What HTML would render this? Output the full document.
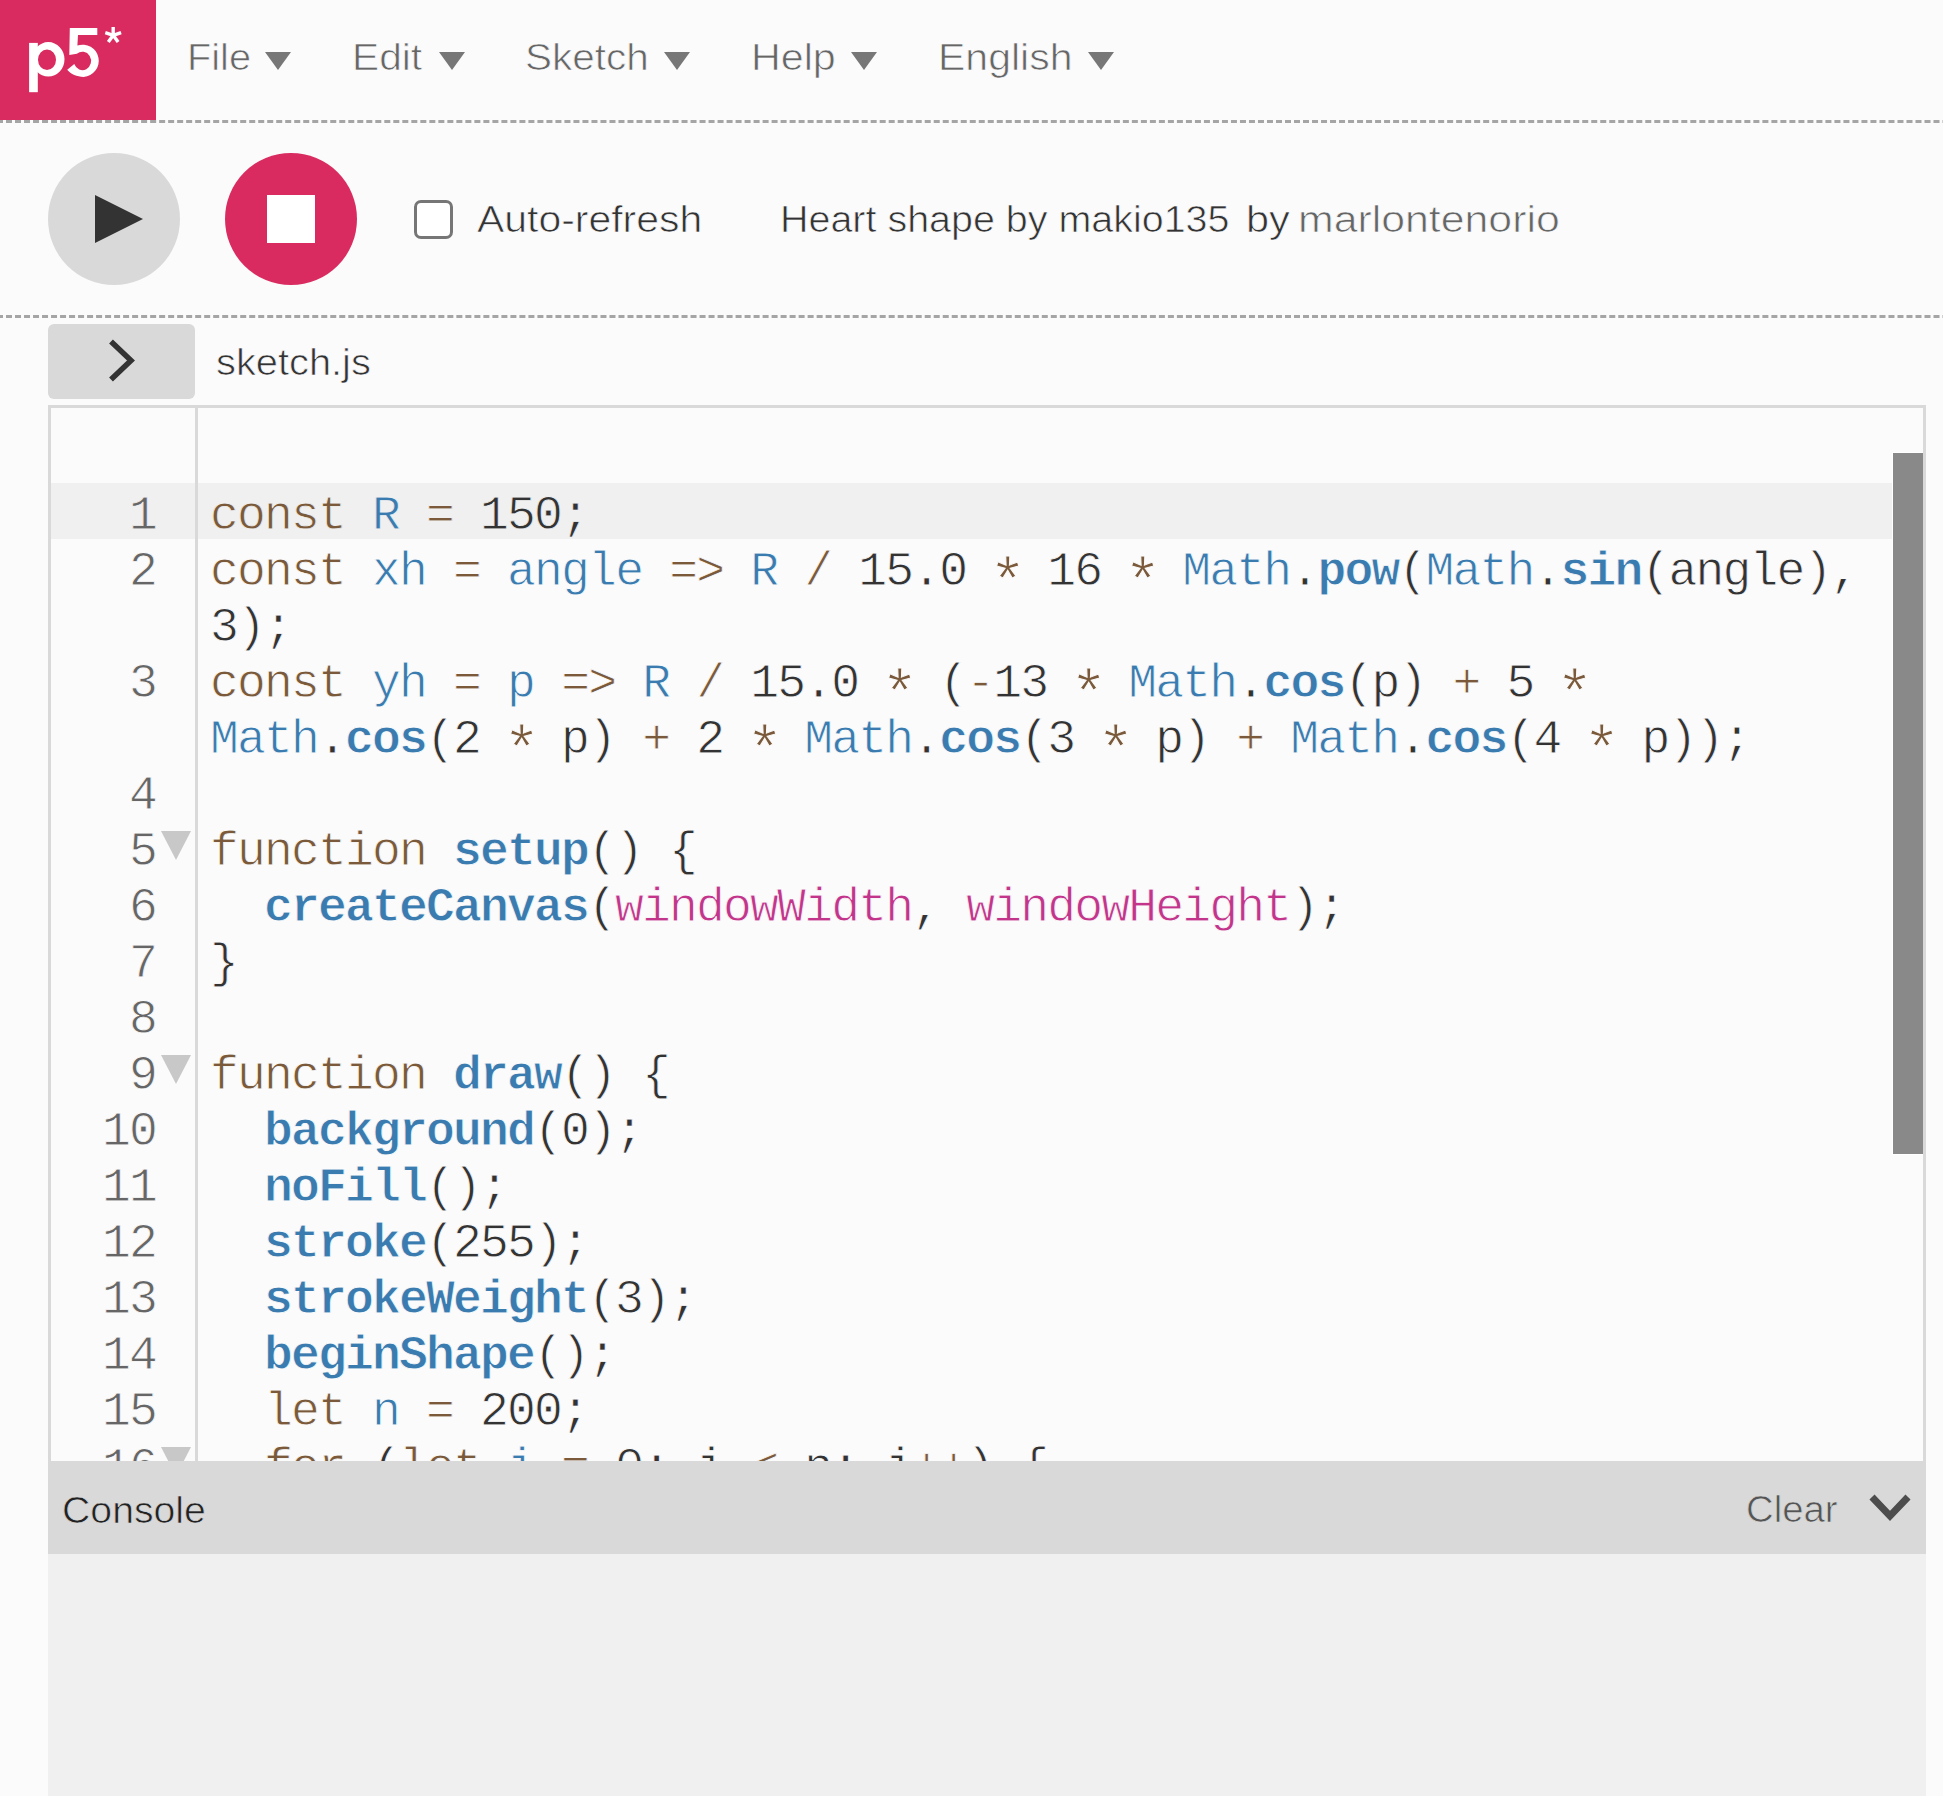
<!DOCTYPE html>
<html><head><meta charset="utf-8">
<style>
html,body{margin:0;padding:0;}
body{width:1943px;height:1796px;overflow:hidden;background:#fbfbfb;position:relative;font-family:"Liberation Sans",sans-serif;}
.abs{position:absolute;}
.sans{font-family:"Liberation Sans",sans-serif;white-space:pre;line-height:1;-webkit-text-stroke:0.7px #fbfbfb;}
.hd{-webkit-text-stroke:0.7px #d9d9d9 !important;}
.dash{position:absolute;left:0;width:1943px;height:3px;
 background-image:linear-gradient(to right,#a5a5a5 0,#a5a5a5 6px,transparent 6px);background-size:9px 3px;background-position:6px 0;}
.menu{position:absolute;top:39px;font-size:37px;color:#666;}
.tri{position:absolute;top:52px;width:0;height:0;border-left:13.5px solid transparent;border-right:13.5px solid transparent;border-top:18px solid #777;}
.code{position:absolute;left:210px;font-family:"Liberation Mono",monospace;font-size:48px;letter-spacing:-1.8px;white-space:pre;line-height:56px;height:56px;color:#333;-webkit-text-stroke:0.8px #fbfbfb;}
.r1{-webkit-text-stroke:0.8px #f0f0f0 !important;}
.ln{position:absolute;left:51px;width:105px;text-align:right;font-family:"Liberation Mono",monospace;font-size:48px;letter-spacing:-1.8px;white-space:pre;line-height:56px;height:56px;color:#666;-webkit-text-stroke:0.8px #fbfbfb;}
.k{color:#7a5a3a}
.v{color:#3a7cb0}
.b{color:#3a7cb0;font-weight:bold}
.pk{color:#c2358b}
.a{display:inline-block;transform:translateY(13.5px) scale(1.3)}
.fold{position:absolute;left:161px;width:0;height:0;border-left:15px solid transparent;border-right:15px solid transparent;border-top:29px solid #c8c8c8;}
</style></head><body>

<!-- NAV -->
<div class="abs" style="left:0;top:0;width:156px;height:120px;background:#d92b60;"></div>
<svg class="abs" style="left:0;top:0" width="156" height="120" viewBox="0 0 156 120">
  <g fill="#fff">
    <rect x="29.1" y="42.9" width="8.7" height="49.3"/>
    <path fill-rule="evenodd" d="M48.3 42.1 A16.2 17.25 0 1 1 48.3 76.6 A16.2 17.25 0 1 1 48.3 42.1 Z M47 49.4 A9 10.35 0 1 0 47 70.1 A9 10.35 0 1 0 47 49.4 Z"/>
    <path d="M69.8 27.9 H97.3 V35 H78 L77.4 45.5 A16.15 16.15 0 1 1 83.65 76.9 C77 76.9 70.8 74.3 67.2 69.8 L74.3 64.05 A8.65 9.2 0 1 0 76.9 53.85 L69.3 55 Z"/>
  </g>
  <g stroke="#fff" stroke-width="3.4" stroke-linecap="butt">
    <line x1="113.2" y1="35.3" x2="113.2" y2="27"/>
    <line x1="113.2" y1="35.3" x2="121.1" y2="32.7"/>
    <line x1="113.2" y1="35.3" x2="118.1" y2="42"/>
    <line x1="113.2" y1="35.3" x2="108.3" y2="42"/>
    <line x1="113.2" y1="35.3" x2="105.3" y2="32.7"/>
  </g>
</svg>

<div class="menu sans" style="transform:scaleX(1.073);transform-origin:0 0;left:186.7px;">File</div><div class="tri" style="left:265px"></div>
<div class="menu sans" style="transform:scaleX(1.1);transform-origin:0 0;left:352.4px;">Edit</div><div class="tri" style="left:439px"></div>
<div class="menu sans" style="transform:scaleX(1.094);transform-origin:0 0;left:525.3px;">Sketch</div><div class="tri" style="left:664px"></div>
<div class="menu sans" style="transform:scaleX(1.114);transform-origin:0 0;left:751.2px;">Help</div><div class="tri" style="left:851px"></div>
<div class="menu sans" style="transform:scaleX(1.108);transform-origin:0 0;left:938.4px;">English</div><div class="tri" style="left:1088px"></div>

<svg class="abs" style="left:0;top:120px" width="1943" height="3"><line x1="0" y1="1.5" x2="1943" y2="1.5" stroke="#a5a5a5" stroke-width="3" stroke-dasharray="6 3.007" stroke-dashoffset="3"/></svg>

<!-- TOOLBAR -->
<div class="abs" style="left:48px;top:153px;width:132px;height:132px;border-radius:50%;background:#d9d9d9"></div>
<svg class="abs" style="left:0;top:0" width="400" height="300">
  <polygon points="95,195 95,243 143,219" fill="#333"/>
</svg>
<div class="abs" style="left:225px;top:153px;width:132px;height:132px;border-radius:50%;background:#d92b60"></div>
<div class="abs" style="left:267px;top:195px;width:48px;height:48px;background:#fff"></div>
<div class="abs" style="left:414px;top:200px;width:33px;height:33px;border:3px solid #767676;border-radius:7px;background:#fff"></div>
<div class="abs sans" style="transform:scaleX(1.106);transform-origin:0 0;left:477.2px;top:201px;font-size:37px;color:#333">Auto-refresh</div>
<div class="abs sans" style="transform:scaleX(1.066);transform-origin:0 0;left:779.8px;top:201px;font-size:37px;color:#333">Heart shape by makio135</div>
<div class="abs sans" style="transform:scaleX(1.12);transform-origin:0 0;left:1246.3px;top:201px;font-size:37px;color:#333">by</div>
<div class="abs sans" style="transform:scaleX(1.157);transform-origin:0 0;left:1297.7px;top:201px;font-size:37px;color:#666">marlontenorio</div>

<svg class="abs" style="left:0;top:315px" width="1943" height="3"><line x1="0" y1="1.5" x2="1943" y2="1.5" stroke="#a5a5a5" stroke-width="3" stroke-dasharray="6 3.007" stroke-dashoffset="3"/></svg>

<!-- TAB ROW -->
<div class="abs" style="left:48px;top:324px;width:147px;height:75px;border-radius:6px;background:#d9d9d9"></div>
<svg class="abs" style="left:0;top:0" width="300" height="420">
  <polyline points="111,341.5 131,360.5 111,379.5" fill="none" stroke="#333" stroke-width="5.5"/>
</svg>
<div class="abs sans" style="transform:scaleX(1.076);transform-origin:0 0;left:215.7px;top:344px;font-size:37px;color:#333">sketch.js</div>

<!-- EDITOR -->
<div class="abs" style="left:48px;top:405px;width:1872px;height:1100px;border:3px solid #d9d9d9;background:#fbfbfb"></div>
<div class="abs" style="left:51px;top:483px;width:1841px;height:56px;background:#f0f0f0"></div>
<div class="abs" style="left:195px;top:408px;width:3px;height:1053px;background:#d9d9d9"></div>

<div id="lines">
<div class="ln r1" style="top:488px">1</div>
<div class="code r1" style="top:488px"><span class="k">const</span> <span class="v">R</span> <span class="k">=</span> 150;</div>
<div class="ln" style="top:544px">2</div>
<div class="code" style="top:544px"><span class="k">const</span> <span class="v">xh</span> <span class="k">=</span> <span class="v">angle</span> <span class="k">=&gt;</span> <span class="v">R</span> <span class="k">/</span> 15.0 <span class="k a">*</span> 16 <span class="k a">*</span> <span class="v">Math</span>.<span class="b">pow</span>(<span class="v">Math</span>.<span class="b">sin</span>(angle),</div>
<div class="code" style="top:600px">3);</div>
<div class="ln" style="top:656px">3</div>
<div class="code" style="top:656px"><span class="k">const</span> <span class="v">yh</span> <span class="k">=</span> <span class="v">p</span> <span class="k">=&gt;</span> <span class="v">R</span> <span class="k">/</span> 15.0 <span class="k a">*</span> (<span class="k">-</span>13 <span class="k a">*</span> <span class="v">Math</span>.<span class="b">cos</span>(p) <span class="k">+</span> 5 <span class="k a">*</span></div>
<div class="code" style="top:712px"><span class="v">Math</span>.<span class="b">cos</span>(2 <span class="k a">*</span> p) <span class="k">+</span> 2 <span class="k a">*</span> <span class="v">Math</span>.<span class="b">cos</span>(3 <span class="k a">*</span> p) <span class="k">+</span> <span class="v">Math</span>.<span class="b">cos</span>(4 <span class="k a">*</span> p));</div>
<div class="ln" style="top:768px">4</div>
<div class="ln" style="top:824px">5</div>
<div class="fold" style="top:831px"></div>
<div class="code" style="top:824px"><span class="k">function</span> <span class="b">setup</span>() {</div>
<div class="ln" style="top:880px">6</div>
<div class="code" style="top:880px">  <span class="b">createCanvas</span>(<span class="pk">windowWidth</span>, <span class="pk">windowHeight</span>);</div>
<div class="ln" style="top:936px">7</div>
<div class="code" style="top:936px">}</div>
<div class="ln" style="top:992px">8</div>
<div class="ln" style="top:1048px">9</div>
<div class="fold" style="top:1055px"></div>
<div class="code" style="top:1048px"><span class="k">function</span> <span class="b">draw</span>() {</div>
<div class="ln" style="top:1104px">10</div>
<div class="code" style="top:1104px">  <span class="b">background</span>(0);</div>
<div class="ln" style="top:1160px">11</div>
<div class="code" style="top:1160px">  <span class="b">noFill</span>();</div>
<div class="ln" style="top:1216px">12</div>
<div class="code" style="top:1216px">  <span class="b">stroke</span>(255);</div>
<div class="ln" style="top:1272px">13</div>
<div class="code" style="top:1272px">  <span class="b">strokeWeight</span>(3);</div>
<div class="ln" style="top:1328px">14</div>
<div class="code" style="top:1328px">  <span class="b">beginShape</span>();</div>
<div class="ln" style="top:1384px">15</div>
<div class="code" style="top:1384px">  <span class="k">let</span> <span class="v">n</span> <span class="k">=</span> 200;</div>
<div class="ln" style="top:1440px">16</div>
<div class="fold" style="top:1447px"></div>
<div class="code" style="top:1440px">  <span class="k">for</span> (<span class="k">let</span> <span class="v">i</span> <span class="k">=</span> 0; i <span class="k">&lt;</span> n; i<span class="k">++</span>) {</div>
</div>

<!-- scrollbar -->
<div class="abs" style="left:1892px;top:452px;width:30px;height:701px;background:#898989;border:1px solid #fff;border-right:0"></div>

<!-- CONSOLE -->
<div class="abs" style="left:48px;top:1461px;width:1878px;height:93px;background:#d9d9d9"></div>
<div class="abs" style="left:48px;top:1554px;width:1878px;height:242px;background:#f0f0f0"></div>
<div class="abs sans hd" style="transform:scaleX(1.06);transform-origin:0 0;left:61.9px;top:1492px;font-size:37px;color:#222">Console</div>
<div class="abs sans hd" style="transform:scaleX(1.036);transform-origin:0 0;left:1746.4px;top:1491px;font-size:37px;color:#555">Clear</div>
<svg class="abs" style="left:1850px;top:1480px" width="80" height="60">
  <polyline points="22,17 40,36 58,17" fill="none" stroke="#4d4d4d" stroke-width="7"/>
</svg>

</body></html>
